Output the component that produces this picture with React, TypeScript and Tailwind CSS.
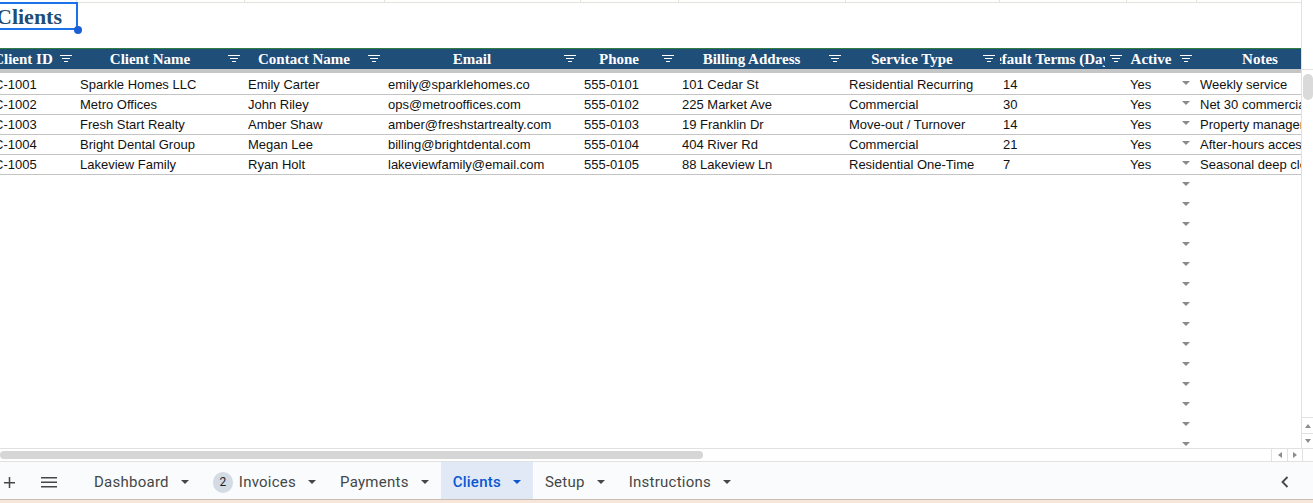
import React from "react";

const widths = [86, 168, 140, 196, 98, 167, 154, 127, 70, 148];

const headers = [
  "Client ID",
  "Client Name",
  "Contact Name",
  "Email",
  "Phone",
  "Billing Address",
  "Service Type",
  "Default Terms (Days)",
  "Active",
  "Notes",
];

const clients = [
  ["C-1001", "Sparkle Homes LLC", "Emily Carter", "emily@sparklehomes.co", "555-0101", "101 Cedar St", "Residential Recurring", "14", "Yes", "Weekly service"],
  ["C-1002", "Metro Offices", "John Riley", "ops@metrooffices.com", "555-0102", "225 Market Ave", "Commercial", "30", "Yes", "Net 30 commercial account"],
  ["C-1003", "Fresh Start Realty", "Amber Shaw", "amber@freshstartrealty.com", "555-0103", "19 Franklin Dr", "Move-out / Turnover", "14", "Yes", "Property manager referral"],
  ["C-1004", "Bright Dental Group", "Megan Lee", "billing@brightdental.com", "555-0104", "404 River Rd", "Commercial", "21", "Yes", "After-hours access code"],
  ["C-1005", "Lakeview Family", "Ryan Holt", "lakeviewfamily@email.com", "555-0105", "88 Lakeview Ln", "Residential One-Time", "7", "Yes", "Seasonal deep clean"],
];

const tabs = [
  { name: "Dashboard" },
  { name: "Invoices", badge: "2" },
  { name: "Payments" },
  { name: "Clients", active: true },
  { name: "Setup" },
  { name: "Instructions" },
];

const FilterIcon = () => (
  <svg width="12" height="8" viewBox="0 0 12 8" className="shrink-0">
    <rect x="0" y="0" width="12" height="1" fill="#ffffff" />
    <rect x="2" y="3" width="8" height="1" fill="#ffffff" />
    <rect x="4" y="6" width="4" height="1" fill="#ffffff" />
  </svg>
);

const DropArrow = ({ color = "#8a8a8a" }: { color?: string }) => (
  <svg width="8" height="4" viewBox="0 0 8 4" className="shrink-0">
    <path d="M0 0 L8 0 L4 4 Z" fill={color} />
  </svg>
);

const SmallTri = ({ dir }: { dir: "up" | "down" | "left" | "right" }) => {
  const d = {
    up: "M0 4 L6 4 L3 0 Z",
    down: "M0 0 L6 0 L3 4 Z",
    left: "M4 0 L4 6 L0 3 Z",
    right: "M0 0 L0 6 L4 3 Z",
  }[dir];
  const vertical = dir === "up" || dir === "down";
  return (
    <svg
      width={vertical ? 6 : 4}
      height={vertical ? 4 : 6}
      viewBox={vertical ? "0 0 6 4" : "0 0 4 6"}
    >
      <path d={d} fill="#8c8c8c" />
    </svg>
  );
};

const SheetGrid = () => {
  const emptyRows = Array.from({ length: 14 });
  return (
    <div className="flex-1 h-[448px] overflow-hidden bg-white">
      <div className="ml-[-9px] w-max">
        {/* top sliver of the row above */}
        <div className="flex h-[3px] border-b border-[#dfe5dd]">
          {widths.map((w, i) => (
            <div key={i} style={{ width: w }} className="h-full border-r border-[#dfe5dd]" />
          ))}
        </div>

        {/* title row */}
        <div className="flex h-[27px]">
          <div className="relative w-[86px] h-full">
            <div className="absolute left-0 right-[-1px] top-[-1px] bottom-0 border-2 border-[#1a73e8]" />
            <div className="absolute right-[-5px] bottom-[-4px] w-[8px] h-[8px] rounded-full bg-[#1a5fd6]" />
            <div className="h-full flex items-center pl-[5px] pb-[1px] text-[22px] font-bold text-[#1f4e79] font-['Liberation_Serif',serif] whitespace-nowrap">
              Clients
            </div>
          </div>
        </div>

        <div className="h-[18px]" />

        {/* header */}
        <div className="flex h-[21px] border-t border-[#2f7d3e] bg-[#1f4e79]">
          {headers.map((h, i) => (
            <div key={i} style={{ width: widths[i] }} className="flex items-center h-full">
              <div className="flex-1 min-w-0 flex justify-center overflow-hidden">
                <span className="whitespace-nowrap text-white font-bold text-[15px] leading-none font-['Liberation_Serif',serif]">
                  {h}
                </span>
              </div>
              <div className="ml-[5px] mr-[5px]">
                <FilterIcon />
              </div>
            </div>
          ))}
        </div>

        <div className="h-[4px] bg-[#c6c6c6]" />
        <div className="h-[2px]" />

        {/* data rows */}
        {clients.map((row, r) => (
          <div key={r} className="flex h-[20px] border-b border-[#c4c4c4] font-['Liberation_Sans',sans-serif] text-[13px] text-[#111111]">
            {row.map((cell, c) => (
              <div key={c} style={{ width: widths[c] }} className="h-full flex items-center pl-[3px] pr-[3px] overflow-hidden">
                <span className="whitespace-nowrap flex-1 min-w-0 overflow-hidden">{cell}</span>
                {c === 8 && (
                  <span className="mr-[4px] mb-[3px]">
                    <DropArrow />
                  </span>
                )}
              </div>
            ))}
          </div>
        ))}

        {emptyRows.map((_, r) => (
          <div key={r} className="flex h-[20px]">
            {widths.map((w, c) => (
              <div key={c} style={{ width: w }} className="h-full flex items-center justify-end pr-[7px]">
                {c === 8 && (
                  <span className="mb-[3px]">
                    <DropArrow />
                  </span>
                )}
              </div>
            ))}
          </div>
        ))}
      </div>
    </div>
  );
};

const VScroll = () => (
  <div className="w-[12px] h-[448px] border-l border-[#e1e1e1] bg-white flex flex-col">
    <div className="h-[70px] border-b border-[#e1e1e1]" />
    <div className="h-[26px] mt-[4px] ml-[1px] w-[10px] rounded-[5px] bg-[#dadada]" />
    <div className="flex-1" />
    <div className="h-[16px] border-t border-[#e1e1e1] flex items-center justify-center">
      <SmallTri dir="up" />
    </div>
    <div className="h-[15px] border-t border-[#e1e1e1] flex items-center justify-center">
      <SmallTri dir="down" />
    </div>
  </div>
);

const HScroll = () => (
  <div className="h-[14px] border-t border-b border-[#e1e1e1] bg-white flex items-center">
    <div className="w-[703px] h-[8px] rounded-full bg-[#d6d6d6]" />
    <div className="flex-1" />
    <div className="w-[16px] h-full border-l border-[#e1e1e1] flex items-center justify-center">
      <SmallTri dir="left" />
    </div>
    <div className="w-[15px] h-full border-l border-[#e1e1e1] flex items-center justify-center">
      <SmallTri dir="right" />
    </div>
    <div className="w-[11px] h-full border-l border-[#e1e1e1]" />
  </div>
);

const TabBar = () => (
  <div className="h-[37px] bg-[#f9fbfd] flex items-stretch font-['Roboto',sans-serif] text-[15px] tracking-[0.25px] text-[#444746]">
    <div className="w-[18px] flex items-center justify-center pt-[3px]">
      <svg width="11" height="11" viewBox="0 0 11 11">
        <rect x="0" y="5" width="11" height="1.5" fill="#444746" />
        <rect x="4.75" y="0" width="1.5" height="11" fill="#444746" />
      </svg>
    </div>
    <div className="w-[62px] flex items-center justify-center pt-[3px]">
      <svg width="16" height="11" viewBox="0 0 16 11">
        <rect x="0" y="0" width="16" height="1.5" fill="#444746" />
        <rect x="0" y="4.5" width="16" height="1.5" fill="#444746" />
        <rect x="0" y="9" width="16" height="1.5" fill="#444746" />
      </svg>
    </div>
    <div className="w-[2px]" />
    {tabs.map((t) => (
      <div
        key={t.name}
        className={`flex items-center pl-[12px] pr-[12px] pt-[3px] ${t.active ? "bg-[#e1e9f7] text-[#0b57d0] font-medium" : ""}`}
      >
        {t.badge && (
          <span className="w-[20px] h-[21px] mr-[6px] rounded-full bg-[#d3dbe5] text-[12px] tracking-normal text-[#1f1f1f] flex items-center justify-center">
            {t.badge}
          </span>
        )}
        <span className="whitespace-nowrap">{t.name}</span>
        <span className="ml-[12px]">
          <DropArrow color={t.active ? "#0b57d0" : "#444746"} />
        </span>
      </div>
    ))}
    <div className="flex-1" />
    <div className="w-[30px] flex items-center justify-center mr-[13px] pt-[3px]">
      <svg width="8" height="12" viewBox="0 0 8 12">
        <path d="M6.5 1 L1.5 6 L6.5 11" stroke="#444746" strokeWidth="1.8" fill="none" />
      </svg>
    </div>
  </div>
);

export default function App() {
  return (
    <div className="w-[1313px] h-[503px] overflow-hidden flex flex-col bg-white">
      <div className="flex">
        <SheetGrid />
        <VScroll />
      </div>
      <HScroll />
      <TabBar />
      <div className="h-[4px] border-t border-[#c9bdb4] bg-[#f6e6da]" />
    </div>
  );
}
